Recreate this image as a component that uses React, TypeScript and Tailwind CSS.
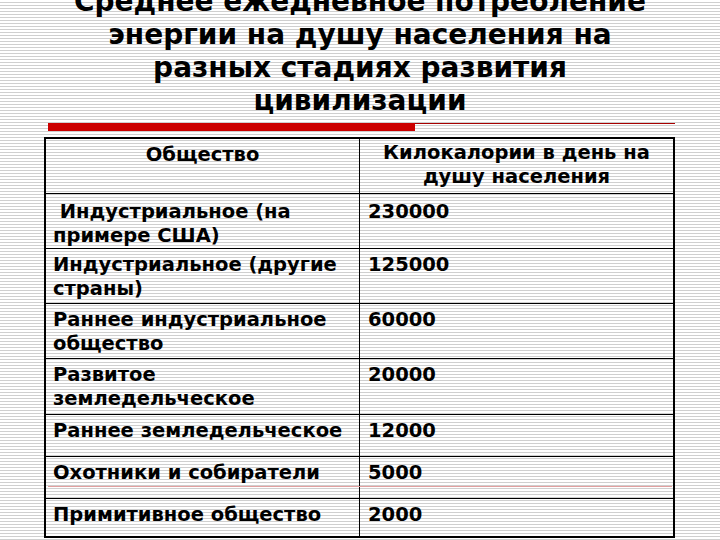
import React from "react";

const rows: { a: React.ReactNode; b: string; h: string; pt: string }[] = [
  { a: "\u00a0Индустриальное (на примере США)", b: "230000", h: "h-[55px]", pt: "pt-[6px]" },
  { a: "Индустриальное (другие страны)", b: "125000", h: "h-[55px]", pt: "pt-[4px]" },
  { a: "Раннее индустриальное общество", b: "60000", h: "h-[55px]", pt: "pt-[4px]" },
  { a: "Развитое земледельческое", b: "20000", h: "h-[56px]", pt: "pt-[4px]" },
  { a: "Раннее земледельческое", b: "12000", h: "h-[42px]", pt: "pt-[4px]" },
  { a: "Охотники и собиратели", b: "5000", h: "h-[42px]", pt: "pt-[4px]" },
  { a: "Примитивное общество", b: "2000", h: "h-[39px]", pt: "pt-[4px]" },
];

export default function App() {
  return (
    <div className="relative w-[720px] h-[540px] overflow-hidden bg-[repeating-linear-gradient(to_bottom,#ffffff_0px,#ffffff_2px,#cfcfcf_2px,#cfcfcf_3px)] font-['DejaVu_Sans','Verdana',sans-serif] text-black">
      <h1 className="-mt-[15px] text-center font-bold text-[28px] leading-[33px]">
        Среднее ежедневное потребление
        <br />
        энергии на душу населения на
        <br />
        разных стадиях развития
        <br />
        цивилизации
      </h1>
      <div className="mt-[6px] ml-[48px] flex items-start h-[8px]">
        <div className="w-[367px] h-[8px] bg-[#cc0000]" />
        <div className="w-[260px] h-px bg-[#a80000]" />
      </div>
      <div className="mt-[6px] ml-[44px] w-[631px] border-2 border-b-0 border-black font-bold text-[19.5px] leading-[24px]">
        <div className="flex h-[55px] border-b border-black">
          <div className="w-[314px] border-r border-black text-center pt-[4px]">Общество</div>
          <div className="flex-1 text-center pt-[2px]">
            Килокалории в день на
            <br />
            душу населения
          </div>
        </div>
        {rows.map((r, i) => (
          <div
            key={i}
            className={`flex ${r.h} ${i < rows.length - 1 ? "border-b" : "border-b-2"} border-black`}
          >
            <div className={`w-[314px] border-r border-black pl-[7px] pr-[2px] ${r.pt}`}>{r.a}</div>
            <div className={`flex-1 pl-[8px] ${r.pt}`}>{r.b}</div>
          </div>
        ))}
      </div>
      <div className="absolute left-[48px] top-[486px] w-[624px] h-px bg-[#e2a0a0]" />
    </div>
  );
}
